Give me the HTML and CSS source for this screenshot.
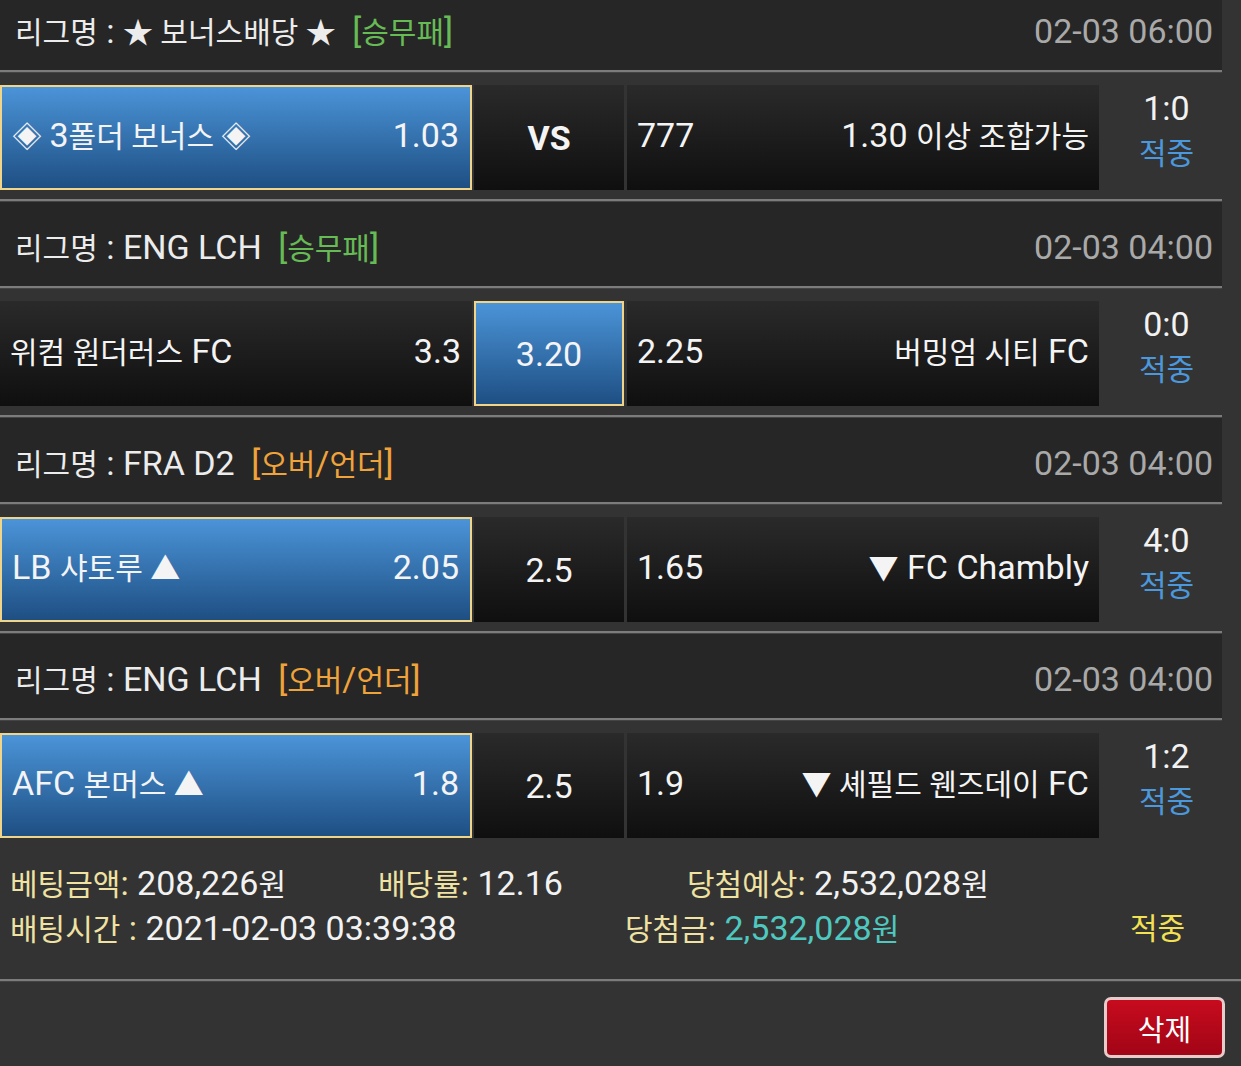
FILE: index.html
```html
<!DOCTYPE html>
<html lang='ko'>
<head>
    <meta charset='UTF-8'>
    <meta name='viewport' content='width=device-width, initial-scale=1.0'>
    <title>베팅내역</title>
    <link rel="stylesheet" href="styles.css">
</head>
<body>
    <div class='board'>
        <div class='league'>
            <span class='league_name'><span class='k'>리그명</span> : <span class='k'>★ 보너스배당 ★</span> <span class='tag green'>[<span class='k'>승무패</span>]</span></span>
            <span class='league_date'>02-03 06:00</span>
        </div>
        <div class='line'></div>
        <div class='match'>
            <div class='cell home pick'><span><span class='k'>◈ </span>3<span class='k'>폴더 보너스 ◈</span></span><span>1.03</span></div>
            <div class='cell mid vs'>VS</div>
            <div class='cell away'><span>777</span><span>1.30 <span class='k'>이상 조합가능</span></span></div>
            <div class='result'><span>1:0</span><span class='k hit'>적중</span></div>
        </div>
        <div class='line'></div>

        <div class='league'>
            <span class='league_name'><span class='k'>리그명</span> : ENG LCH <span class='tag green'>[<span class='k'>승무패</span>]</span></span>
            <span class='league_date'>02-03 04:00</span>
        </div>
        <div class='line'></div>
        <div class='match'>
            <div class='cell home'><span><span class='k'>위컴 원더러스</span> FC</span><span>3.3</span></div>
            <div class='cell mid pick'>3.20</div>
            <div class='cell away'><span>2.25</span><span><span class='k'>버밍엄 시티</span> FC</span></div>
            <div class='result'><span>0:0</span><span class='k hit'>적중</span></div>
        </div>
        <div class='line'></div>

        <div class='league'>
            <span class='league_name'><span class='k'>리그명</span> : FRA D2 <span class='tag orange'>[<span class='k'>오버</span>/<span class='k'>언더</span>]</span></span>
            <span class='league_date'>02-03 04:00</span>
        </div>
        <div class='line'></div>
        <div class='match'>
            <div class='cell home pick'><span>LB <span class='k'>샤토루 ▲</span></span><span>2.05</span></div>
            <div class='cell mid'>2.5</div>
            <div class='cell away'><span>1.65</span><span><span class='k'>▼</span> FC Chambly</span></div>
            <div class='result'><span>4:0</span><span class='k hit'>적중</span></div>
        </div>
        <div class='line'></div>

        <div class='league'>
            <span class='league_name'><span class='k'>리그명</span> : ENG LCH <span class='tag orange'>[<span class='k'>오버</span>/<span class='k'>언더</span>]</span></span>
            <span class='league_date'>02-03 04:00</span>
        </div>
        <div class='line'></div>
        <div class='match'>
            <div class='cell home pick'><span>AFC <span class='k'>본머스 ▲</span></span><span>1.8</span></div>
            <div class='cell mid'>2.5</div>
            <div class='cell away'><span>1.9</span><span><span class='k'>▼ 셰필드 웬즈데이</span> FC</span></div>
            <div class='result'><span>1:2</span><span class='k hit'>적중</span></div>
        </div>
    </div>

    <div class='summary'>
        <div class='sum_row'>
            <span class='c1'><span class='lbl'><span class='k'>베팅금액</span>:</span> 208,226<span class='k'>원</span></span>
            <span class='c2'><span class='lbl'><span class='k'>배당률</span>:</span> 12.16</span>
            <span><span class='lbl'><span class='k'>당첨예상</span>:</span> 2,532,028<span class='k'>원</span></span>
        </div>
        <div class='sum_row'>
            <span class='c3'><span class='lbl'><span class='k'>배팅시간</span> :</span> 2021-02-03 03:39:38</span>
            <span class='c4'><span class='lbl'><span class='k'>당첨금</span>:</span> <span class='won'>2,532,028<span class='k'>원</span></span></span>
            <span class='k win'>적중</span>
        </div>
    </div>
    <div class='line'></div>
    <div class='actions'>
        <button class='btn_del'>삭제</button>
    </div>
</body>
</html>
```

FILE: styles.css
```css
*{
    margin: 0;
    padding: 0;
    box-sizing: border-box;
}

body{
    background-color: #333333;
    color: #f2f2f2;
    font-family: Roboto, "Noto Sans CJK KR", sans-serif;
    font-size: 34px;
    overflow: hidden;
}

/* korean runs and symbols are drawn a bit smaller than the latin text */
.k{
    font-size: 30px;
    line-height: 1;
}

.board{
    width: 1222px;
    margin-top: -14px;
}

.line{
    height: 3px;
    background-color: #7c7c7c;
    border-bottom: 1px solid #444;
}

.league{
    height: 84px;
    display: flex;
    align-items: center;
    justify-content: space-between;
    padding: 5px 9px 0 15px;
    background-color: #262626;
    line-height: 40px;
}

.league_name{
    color: #ececec;
}

.tag{
    margin-left: 8px;
}

.green{
    color: #66bb55;
}

.orange{
    color: #f0a33a;
}

.league_date{
    color: #a9a9a9;
}

.match{
    display: flex;
    height: 126px;
    padding: 12px 0 9px 0;
    background-color: #333333;
    line-height: 40px;
}

.cell{
    height: 105px;
    display: flex;
    align-items: center;
    background: linear-gradient(#2a2a2a, #0f0f0f);
    color: #f4f4f4;
}

.home{
    width: 472px;
    justify-content: space-between;
    padding: 0 11px 5px 10px;
}

.mid{
    width: 150px;
    margin-left: 2px;
    justify-content: center;
    padding-top: 1px;
}

.vs{
    font-weight: bold;
    font-size: 34px;
}

.away{
    width: 472px;
    margin-left: 3px;
    justify-content: space-between;
    padding: 0 10px 5px 10px;
}

.pick{
    background: linear-gradient(#4b94d8, #1e4f83);
    border: 2px solid #f0d48a;
}

.result{
    width: 123px;
    display: flex;
    flex-direction: column;
    align-items: center;
    padding: 0 0 0 12px;
    line-height: 46px;
}

.result .k{
    line-height: 46px;
}

.hit{
    color: #4b98dc;
}

.summary{
    height: 132px;
    padding: 14px 0 0 10px;
}

.sum_row{
    display: flex;
    height: 45px;
    line-height: 45px;
}

.lbl{
    color: #efe2a2;
}

.c1{
    width: 368px;
}

.c2{
    width: 309px;
}

.c3{
    width: 615px;
}

.c4{
    width: 505px;
}

.won{
    color: #4fc9c0;
}

.win{
    color: #f1e153;
    line-height: 45px;
}

.actions{
    display: flex;
    justify-content: flex-end;
    padding: 15px 16px 0 0;
}

.btn_del{
    width: 121px;
    height: 61px;
    font-family: Roboto, "Noto Sans CJK KR", sans-serif;
    font-size: 29px;
    color: #ffffff;
    background: linear-gradient(#c70b1e, #a10516);
    border: 3px solid #e8cccc;
    border-radius: 7px;
}
```
